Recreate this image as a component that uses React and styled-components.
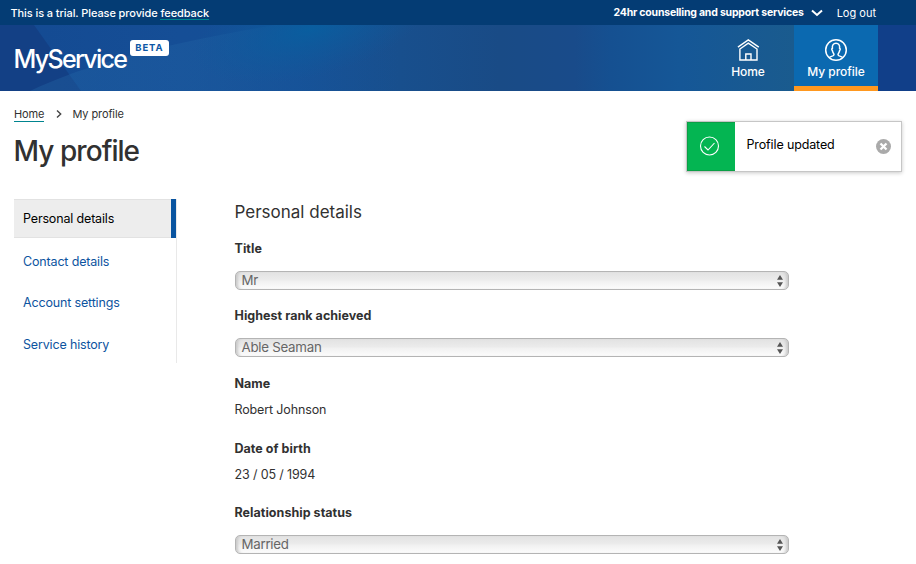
import React from "react";
import styled, { createGlobalStyle } from "styled-components";

const Global = createGlobalStyle`
  * { box-sizing: border-box; }
  html, body { margin: 0; background: #fff; height: 564px; overflow: hidden; }
  body { font-family: Inter, "Liberation Sans", sans-serif; color: #313131; font-size: 12.5px; }
  a { color: inherit; text-decoration: none; }
`;

const Page = styled.div`
  position: relative;
  width: 916px;
  height: 564px;
  overflow: hidden;
`;

const TopBar = styled.div`
  display: flex;
  align-items: center;
  height: 25px;
  padding: 0 40px 0 10.5px;
  background: #043c74;
  color: #fff;
  font-size: 11px;
  white-space: nowrap;
`;

const Trial = styled.span`
  flex: 1;
  line-height: 15px;
  padding-top: 1px;
  font-weight: 500;
  letter-spacing: -0.09px;
`;

const Feedback = styled.a`
  display: inline-block;
  line-height: 11px;
  border-bottom: 1px solid #00848f;
`;

const Support = styled.a`
  font-size: 10.5px;
  font-weight: 700;
  letter-spacing: -0.2px;
`;

const TopChevron = styled.svg`
  width: 12px;
  height: 8px;
  margin: 1px 14px 0 7px;
`;

const Header = styled.header`
  position: relative;
  display: flex;
  height: 66px;
  padding: 0 38px 0 14px;
  color: #fff;
  background: linear-gradient(90deg, #144a92 0, #154e96 180px, #144f96 300px, #184f8d 400px, #194b86 500px, #194b8a 575px, #155091 610px, #155797 680px, #1a5b8e 794px, #123f88 880px, #103d84 916px);
`;

const HeaderArt = styled.svg`
  position: absolute;
  inset: 0;
  width: 916px;
  height: 66px;
`;

const Logo = styled.div`
  position: relative;
  flex: 1;
  display: flex;
  align-items: flex-start;
`;

const LogoText = styled.span`
  margin: 17px 0 0 -0.5px;
  font-size: 25px;
  line-height: 34px;
  font-weight: 500;
  letter-spacing: -1.7px;
`;

const Beta = styled.span`
  margin: 15px 0 0 4px;
  width: 39px;
  height: 16px;
  padding-left: 5px;
  border-radius: 3px;
  background: #fff;
  color: #0d57a5;
  font-size: 9.5px;
  font-weight: 700;
  line-height: 16px;
  letter-spacing: 0.9px;
`;

const Nav = styled.nav`
  position: relative;
  display: flex;
`;

const NavItem = styled.a`
  display: flex;
  flex-direction: column;
  align-items: center;
  width: ${(p) => (p.$active ? 84 : 92)}px;
  height: 66px;
  padding-top: 13px;
  background: ${(p) => (p.$active ? "#0b69b0" : "transparent")};
  border-bottom: 5px solid ${(p) => (p.$active ? "#ff981f" : "transparent")};
  font-size: 12px;
  font-weight: 500;
  line-height: 16px;
  letter-spacing: -0.05px;
  svg { width: 24px; height: 24px; margin-bottom: 2px; }
`;

const Breadcrumb = styled.nav`
  display: flex;
  align-items: center;
  height: 16px;
  margin: 15px 0 0 14px;
  font-size: 11px;
  line-height: 14px;
  letter-spacing: -0.1px;
  svg { width: 6px; height: 8px; margin: 0 10.5px 0 11.5px; }
`;

const Crumb = styled.a`
  height: 15px;
  border-bottom: 1px solid ${(p) => (p.$link ? "#00848f" : "transparent")};
`;

const PageTitle = styled.h1`
  margin: 9px 0 0 13.5px;
  height: 40px;
  font-size: 28px;
  line-height: 40px;
  font-weight: 500;
  letter-spacing: -0.95px;
`;

const Columns = styled.div`
  display: flex;
  gap: 58px;
  margin: 28px 0 0 14px;
`;

const SideNav = styled.nav`
  width: 163px;
  height: 164px;
  border-right: 1px solid #e9e9e9;
`;

const SideItem = styled.a`
  display: flex;
  align-items: center;
  height: 41.5px;
  padding-left: 9px;
  font-size: 12.5px;
  letter-spacing: -0.16px;
  color: #0d54a0;
`;

const ActiveSideItem = styled(SideItem)`
  height: 39px;
  margin-bottom: 2.6px;
  color: #000;
  background: #ededed;
  border: solid #e2e2e2;
  border-width: 1px 0;
  width: 162px;
  position: relative;
  &::after {
    content: "";
    position: absolute;
    top: -1px;
    right: 0;
    bottom: -1px;
    width: 5px;
    background: #0954a0;
  }
`;

const Form = styled.main`
  width: 554px;
`;

const SectionTitle = styled.h2`
  margin: 0 0 0 -0.5px;
  height: 26px;
  font-size: 17px;
  line-height: 26px;
  font-weight: 400;
`;

const Field = styled.div`
  padding-top: ${(p) => p.$gap}px;
`;

const Label = styled.div`
  height: 18px;
  margin-left: -0.5px;
  font-size: 12.5px;
  line-height: 18px;
  font-weight: 700;
  letter-spacing: 0.04px;
`;

const Value = styled.div`
  height: 18px;
  margin: 8px 0 0 -0.5px;
  font-size: 12.5px;
  line-height: 18px;
  letter-spacing: -0.14px;
`;

const SelectBox = styled.div`
  display: flex;
  align-items: center;
  justify-content: space-between;
  height: 19px;
  margin: 13px 0 1px;
  padding: 0 5px 0 5.5px;
  border: 1px solid #b4b4b4;
  border-radius: 5px;
  background: linear-gradient(#e2e2e2 0%, #ebebeb 45%, #f1f1f1 55%, #fcfcfc 100%);
  box-shadow: inset 4px 0 3px -2px #c9c9c9, inset -4px 0 3px -2px #c9c9c9;
  color: #666;
  font-size: 13.3px;
  line-height: 17px;
  letter-spacing: -0.26px;
  svg { width: 6px; height: 12px; }
`;

const Toast = styled.div`
  position: absolute;
  left: 686px;
  top: 121px;
  display: flex;
  width: 216px;
  height: 51px;
  border: 1px solid #c6c6c6;
  background: #fff;
  box-shadow: 0 1px 4px rgba(0, 0, 0, 0.22);
  color: #000;
`;

const ToastIcon = styled.div`
  display: flex;
  align-items: center;
  justify-content: center;
  width: 48px;
  height: 49px;
  padding: 0 3px 1px 0;
  border: 1px solid #0b9f46;
  border-right: 0;
  background: #04b552;
`;

const ToastText = styled.div`
  flex: 1;
  padding: 14px 0 0 11.5px;
  line-height: 18px;
  font-size: 12.5px;
  letter-spacing: -0.13px;
`;

const ToastClose = styled.button`
  margin: 17px 10.5px 0 0;
  width: 15px;
  height: 15px;
  padding: 0;
  border: 0;
  background: none;
  svg { display: block; }
`;

const Select = ({ children }) => (
  <SelectBox>
    {children}
    <svg viewBox="0 0 6 12" fill="#555">
      <path d="M3 0L6 4.7H0zM3 12L0 7.3h6z" />
    </svg>
  </SelectBox>
);

const Art = () => (
  <HeaderArt viewBox="0 0 916 66">
    <defs>
      <radialGradient id="glow" gradientTransform="translate(310 4) rotate(-14) scale(120 48)" gradientUnits="userSpaceOnUse" cx="0" cy="0" r="1">
        <stop offset="0" stopColor="#085fa0" stopOpacity=".9" />
        <stop offset="1" stopColor="#0d5a9c" stopOpacity="0" />
      </radialGradient>
      <linearGradient id="sweep" gradientUnits="userSpaceOnUse" x1="30" y1="0" x2="400" y2="0">
        <stop offset="0" stopColor="#2468a8" stopOpacity=".36" />
        <stop offset=".45" stopColor="#2468a8" stopOpacity=".3" />
        <stop offset="1" stopColor="#2468a8" stopOpacity="0" />
      </linearGradient>
    </defs>
    <path d="M0 0H34L81 66H0Z" fill="#133b7e" fillOpacity=".65" />
    <path d="M30 66C90 38 160 20 275 0H400V66Z" fill="url(#sweep)" />
    <rect x="170" width="280" height="66" fill="url(#glow)" />
    <path d="M878 0H916V66H878Z" fill="#113f89" />
  </HeaderArt>
);

export default function App() {
  return (
    <>
      <Global />
      <Page>
        <TopBar>
          <Trial>
            This is a trial. Please provide <Feedback href="#">feedback</Feedback>
          </Trial>
          <Support href="#">24hr counselling and support services</Support>
          <TopChevron viewBox="0 0 12 8" fill="none" stroke="#fff" strokeWidth="2">
            <path d="M1 1.5L6 6l5-4.5" />
          </TopChevron>
          <a href="#">Log out</a>
        </TopBar>
        <Header>
          <Art />
          <Logo>
            <LogoText>MyService</LogoText>
            <Beta>BETA</Beta>
          </Logo>
          <Nav>
            <NavItem href="#">
              <svg viewBox="0 0 24 24" fill="none" stroke="#fff" strokeWidth="1.4">
                <path d="M1.900 9.100L12.300 1.900 22.800 9.100M3.900 22V11L12.300 5.200 21 11V22ZM9.800 22V16h5.200v6" />
              </svg>
              Home
            </NavItem>
            <NavItem href="#" $active>
              <svg viewBox="0 0 24 24" fill="none" stroke="#fff" strokeWidth="1.5">
                <circle cx="12" cy="12" r="10.3" />
                <path d="M5.200 19.500c1.400-1.200 4.800-1.300 4.800-2.800 0-1.300-1.400-2-1.600-4.100-.9-1-.7-2 0-2.300-.4-3.200 1-5 3.600-5s4 1.800 3.600 5c.7.300.9 1.300 0 2.300-.2 2.100-1.600 2.800-1.600 4.100 0 1.500 3.400 1.600 4.800 2.800" />
              </svg>
              My profile
            </NavItem>
          </Nav>
        </Header>
        <Breadcrumb>
          <Crumb href="#" $link>Home</Crumb>
          <svg viewBox="0 0 6 8" fill="none" stroke="#444" strokeWidth="1.4">
            <path d="M1 .5L4.700 4 1 7.500" />
          </svg>
          <Crumb as="span">My profile</Crumb>
        </Breadcrumb>
        <PageTitle>My profile</PageTitle>
        <Columns>
          <SideNav>
            <ActiveSideItem href="#">Personal details</ActiveSideItem>
            <SideItem href="#">Contact details</SideItem>
            <SideItem href="#">Account settings</SideItem>
            <SideItem href="#">Service history</SideItem>
          </SideNav>
          <Form>
            <SectionTitle>Personal details</SectionTitle>
            <Field $gap={15}>
              <Label>Title</Label>
              <Select>Mr</Select>
            </Field>
            <Field $gap={16}>
              <Label>Highest rank achieved</Label>
              <Select>Able Seaman</Select>
            </Field>
            <Field $gap={17}>
              <Label>Name</Label>
              <Value>Robert Johnson</Value>
            </Field>
            <Field $gap={21}>
              <Label>Date of birth</Label>
              <Value>23 / 05 / 1994</Value>
            </Field>
            <Field $gap={20}>
              <Label>Relationship status</Label>
              <Select>Married</Select>
            </Field>
          </Form>
        </Columns>
        <Toast>
          <ToastIcon>
            <svg width="22" height="22" viewBox="0 0 22 22" fill="none" stroke="#fff" strokeWidth="1.1">
              <circle cx="10.5" cy="11" r="9" />
              <path d="M5.500 11.500L9 15l6.500-7" />
            </svg>
          </ToastIcon>
          <ToastText>Profile updated</ToastText>
          <ToastClose aria-label="Close">
            <svg width="15" height="15" viewBox="0 0 15 15">
              <circle cx="7.5" cy="7.5" r="7.5" fill="#aaa" />
              <path d="M4.500 4.500l6 6M10.500 4.500l-6 6" stroke="#fff" strokeWidth="2.3" />
            </svg>
          </ToastClose>
        </Toast>
      </Page>
    </>
  );
}
